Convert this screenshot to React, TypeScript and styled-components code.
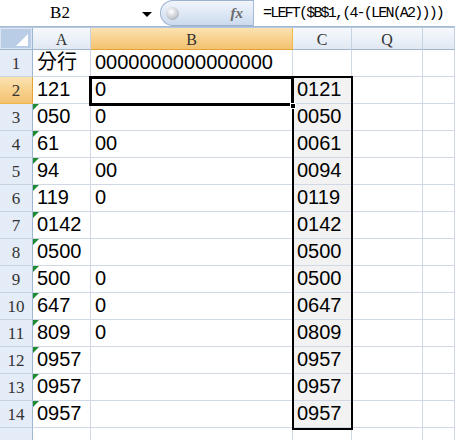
import React from 'react';
import styled, { createGlobalStyle } from 'styled-components';

const GlobalStyle = createGlobalStyle`
  html, body {
    margin: 0;
    padding: 0;
    background: #ffffff;
    overflow: hidden;
  }
`;

const Sheet = styled.div`
  width: 455px;
  height: 440px;
  overflow: hidden;
  display: flex;
  flex-direction: column;
  background: #ffffff;
`;

const FormulaBar = styled.div`
  display: flex;
  height: 27px;
  border-bottom: 1px solid #a5b9d4;
  background: #ffffff;
`;

const NameBox = styled.div`
  width: 160px;
  display: flex;
  align-items: center;
  font-family: "Liberation Serif", serif;
  font-size: 17px;
  color: #000;
  span {
    flex: 1;
    text-align: center;
    padding-right: 22px;
  }
`;

const DropArrow = styled.div`
  width: 0;
  height: 0;
  border-left: 5px solid transparent;
  border-right: 5px solid transparent;
  border-top: 5px solid #000;
  margin-right: 8px;
  margin-top: 2px;
`;

const Pill = styled.div`
  width: 93px;
  height: 26px;
  border: 1px solid #9cb2cf;
  border-right: none;
  border-radius: 14px 0 0 14px;
  background: linear-gradient(#f1f5fb, #dbe6f4 60%, #cbdaee);
  display: flex;
  align-items: center;
  justify-content: space-between;
  padding: 0 10px 0 5px;
  box-sizing: border-box;
`;

const Knob = styled.div`
  width: 13px;
  height: 13px;
  border-radius: 50%;
  background: radial-gradient(circle at 40% 35%, #ffffff, #c8cdd4 55%, #8d949e);
`;

const Fx = styled.span`
  font-family: "Liberation Serif", serif;
  font-style: italic;
  font-size: 15px;
  color: #6b6b6b;
  font-weight: bold;
`;

const FormulaText = styled.div`
  flex: 1;
  border-left: 1px solid #a5b9d4;
  display: flex;
  align-items: center;
  padding-left: 9px;
  font-family: "Liberation Mono", monospace;
  font-size: 15px;
  letter-spacing: -1.8px;
  color: #000;
  white-space: nowrap;
`;

const Strip = styled.div`
  height: 3px;
  background: #d5e1f0;
  border-bottom: 1px solid #b6c8df;
`;

const GridWrap = styled.div`
  position: relative;
`;

const Grid = styled.div`
  display: grid;
  grid-template-columns: 33px 58px 202px 59px 71px 32px;
  grid-template-rows: 22px repeat(15, 27px);
`;

const Corner = styled.div`
  background: #dde7f4;
  border-right: 1px solid #9eb6ce;
  border-bottom: 1px solid #9eb6ce;
  box-sizing: border-box;
  position: relative;
  &::before {
    content: '';
    position: absolute;
    inset: 1px;
    background: #b9cde6;
  }
  &::after {
    content: '';
    position: absolute;
    right: 4px;
    bottom: 3px;
    width: 0;
    height: 0;
    border-left: 12px solid transparent;
    border-bottom: 12px solid #ffffff;
  }
`;

const ColHead = styled.div<{ $active?: boolean }>`
  box-sizing: border-box;
  border-right: 1px solid ${p => (p.$active ? '#f2b94a' : '#c5d2e2')};
  border-bottom: 1px solid ${p => (p.$active ? '#e3a232' : '#9eb6ce')};
  background: ${p =>
    p.$active
      ? 'linear-gradient(#fbe3b3, #f8d08a 55%, #f3c271)'
      : 'linear-gradient(#f6f9fc, #eaf0f7 55%, #e1e8f2)'};
  display: flex;
  align-items: center;
  justify-content: center;
  font-family: "Liberation Serif", serif;
  font-size: 16px;
  color: #333;
  padding-top: 2px;
`;

const RowHead = styled.div<{ $active?: boolean }>`
  box-sizing: border-box;
  border-right: 1px solid ${p => (p.$active ? '#e3a232' : '#9eb6ce')};
  border-bottom: 1px solid ${p => (p.$active ? '#f2b94a' : '#c5d2e2')};
  background: ${p =>
    p.$active
      ? 'linear-gradient(#fbe3b3, #f8d08a 55%, #f3c271)'
      : '#e4ecf7'};
  display: flex;
  align-items: flex-end;
  justify-content: center;
  padding-bottom: 2px;
  font-family: "Liberation Serif", serif;
  font-size: 17px;
  color: #333;
`;

const Cell = styled.div<{ $shade?: boolean; $flag?: boolean }>`
  box-sizing: border-box;
  position: relative;
  border-right: 1px solid #d0d7e5;
  border-bottom: 1px solid #d0d7e5;
  background: ${p => (p.$shade ? '#f2f2f2' : '#ffffff')};
  display: flex;
  align-items: flex-end;
  padding: 0 0 3px 4px;
  font-family: "Liberation Sans", "Noto Sans CJK TC", sans-serif;
  font-size: 20px;
  line-height: 22px;
  color: #000;
  white-space: nowrap;
  &::before {
    content: '';
    display: ${p => (p.$flag ? 'block' : 'none')};
    position: absolute;
    left: 0;
    top: 0;
    width: 0;
    height: 0;
    border-top: 6px solid #1e8a32;
    border-right: 6px solid transparent;
  }
`;

const SelectBox = styled.div`
  position: absolute;
  left: 89px;
  top: 48px;
  width: 205px;
  height: 30px;
  border: 3px solid #000;
  box-sizing: border-box;
  pointer-events: none;
`;

const FillHandle = styled.div`
  position: absolute;
  left: 290px;
  top: 75px;
  width: 6px;
  height: 6px;
  background: #000;
  border: 1px solid #fff;
  box-sizing: border-box;
`;

const RangeBox = styled.div`
  position: absolute;
  left: 292px;
  top: 48px;
  width: 61px;
  height: 354px;
  border: 2px solid #000;
  box-sizing: border-box;
  pointer-events: none;
`;

const colA = ['分行', '121', '050', '61', '94', '119', '0142', '0500', '500', '647', '809', '0957', '0957', '0957'];
const colB = ['0000000000000000', '0', '0', '00', '00', '0', '', '', '0', '0', '0', '', '', ''];
const colC = ['', '0121', '0050', '0061', '0094', '0119', '0142', '0500', '0500', '0647', '0809', '0957', '0957', '0957'];

export default function App() {
  const rows = Array.from({ length: 15 }, (_, i) => i);
  return (
    <>
      <GlobalStyle />
      <Sheet>
        <FormulaBar>
          <NameBox>
            <span>B2</span>
            <DropArrow />
          </NameBox>
          <Pill>
            <Knob />
            <Fx>fx</Fx>
          </Pill>
          <FormulaText>=LEFT($B$1,(4-(LEN(A2))))</FormulaText>
        </FormulaBar>
        <Strip />
        <GridWrap>
          <Grid>
            <Corner />
            <ColHead>A</ColHead>
            <ColHead $active>B</ColHead>
            <ColHead>C</ColHead>
            <ColHead>Q</ColHead>
            <ColHead />
            {rows.map(i => (
              <React.Fragment key={i}>
                <RowHead $active={i === 1}>{i < 14 ? i + 1 : ''}</RowHead>
                <Cell $flag={i >= 2 && i < 14}>{colA[i] ?? ''}</Cell>
                <Cell>{colB[i] ?? ''}</Cell>
                <Cell $shade={i >= 1 && i < 14}>{colC[i] ?? ''}</Cell>
                <Cell />
                <Cell />
              </React.Fragment>
            ))}
          </Grid>
          <RangeBox />
          <SelectBox />
          <FillHandle />
        </GridWrap>
      </Sheet>
    </>
  );
}
